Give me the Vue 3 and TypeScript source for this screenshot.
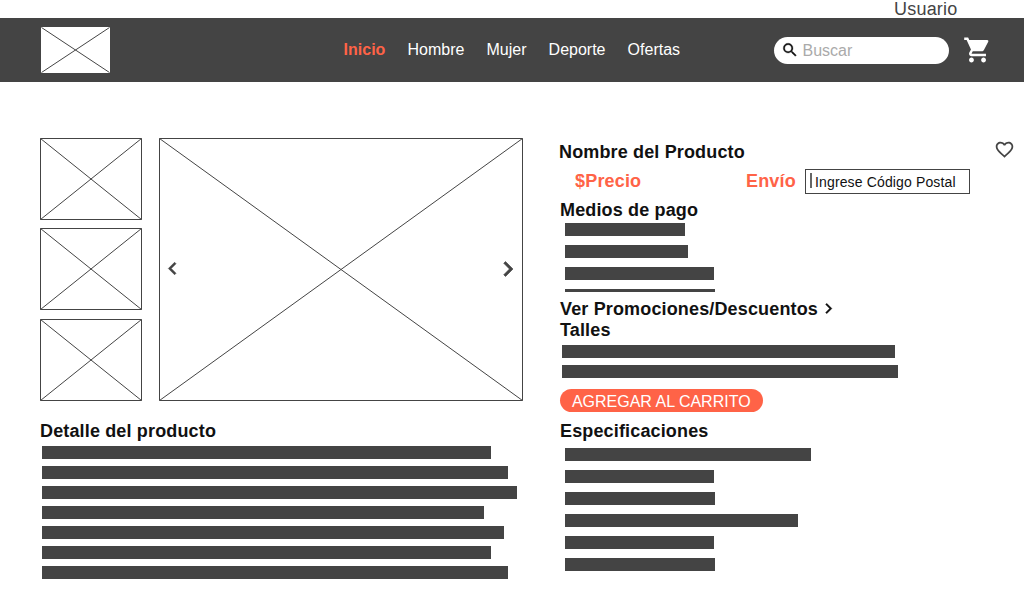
<script setup lang="ts">
interface NavItem {
  label: string
  active?: boolean
}

const navItems: NavItem[] = [
  { label: 'Inicio', active: true },
  { label: 'Hombre' },
  { label: 'Mujer' },
  { label: 'Deporte' },
  { label: 'Ofertas' },
]

const detailLines: number[] = [449, 466, 475, 442, 462, 449, 466]
const paymentLines: number[] = [120, 123, 149, 150]
const sizeLines: number[] = [333, 336]
const specLines: number[] = [246, 149, 150, 233, 149, 150]
</script>

<template>
  <div class="page">
    <div class="topbar"><span class="user">Usuario</span></div>

    <header class="header">
      <svg class="logo" viewBox="0 0 69 46">
        <rect width="69" height="46" fill="#fff" />
        <path d="M0.5 0.5L68.5 45.5M68.5 0.5L0.5 45.5" stroke="#444" />
      </svg>
      <nav class="nav">
        <a v-for="item in navItems" :key="item.label" :class="{ active: item.active }">{{ item.label }}</a>
      </nav>
      <div class="search">
        <svg class="search-icon" viewBox="0 0 24 24">
          <path d="M15.5 14h-.79l-.28-.27A6.47 6.47 0 0 0 16 9.5 6.5 6.5 0 1 0 9.5 16c1.61 0 3.09-.59 4.23-1.57l.27.28v.79l5 4.99L20.49 19l-4.99-5zm-6 0C7.01 14 5 11.99 5 9.5S7.01 5 9.5 5 14 7.01 14 9.5 11.99 14 9.5 14z" />
        </svg>
        <span>Buscar</span>
      </div>
      <svg class="cart" viewBox="0 0 24 24" preserveAspectRatio="none">
        <path d="M7 18c-1.1 0-1.99.9-1.99 2S5.9 22 7 22s2-.9 2-2-.9-2-2-2zM1 2v2h2l3.6 7.59-1.35 2.45c-.16.28-.25.61-.25.96 0 1.1.9 2 2 2h12v-2H7.42c-.14 0-.25-.11-.25-.25l.03-.12.9-1.63h7.45c.75 0 1.41-.41 1.75-1.03l3.58-6.49A1 1 0 0 0 20 4H5.21l-.94-2H1zm16 16c-1.1 0-1.99.9-1.99 2s.89 2 1.99 2 2-.9 2-2-.9-2-2-2z" />
      </svg>
    </header>

    <main class="main">
      <section class="left">
        <div class="gallery">
          <div class="thumbs">
            <svg v-for="n in 3" :key="n" class="thumb" viewBox="0 0 102 82">
              <path d="M0.5 0.5H101.5V81.5H0.5ZL101.5 81.5M101.5 0.5L0.5 81.5" />
            </svg>
          </div>
          <div class="viewer">
            <svg class="photo" viewBox="0 0 364 263">
              <path d="M0.5 0.5H363.5V262.5H0.5ZL363.5 262.5M363.5 0.5L0.5 262.5" />
            </svg>
            <svg class="prev" viewBox="0 0 24 24"><path d="M15.41 7.41L14 6l-6 6 6 6 1.41-1.41L10.83 12z" /></svg>
            <svg class="next" viewBox="0 0 24 24"><path d="M10 6L8.59 7.41 13.17 12l-4.58 4.59L10 18l6-6z" /></svg>
          </div>
        </div>
        <h2 class="detail-title">Detalle del producto</h2>
        <div class="bars detail">
          <div v-for="(w, i) in detailLines" :key="i" class="bar" :style="{ width: w + 'px' }"></div>
        </div>
      </section>

      <section class="right">
        <div class="name-row">
          <h1>Nombre del Producto</h1>
          <svg class="heart" viewBox="0 0 24 24">
            <path d="M16.5 3c-1.74 0-3.41.81-4.5 2.09C10.91 3.81 9.24 3 7.5 3 4.42 3 2 5.42 2 8.5c0 3.78 3.4 6.86 8.55 11.54L12 21.35l1.45-1.32C18.6 15.36 22 12.28 22 8.5 22 5.42 19.58 3 16.5 3zm-4.4 15.55l-.1.1-.1-.1C7.14 14.24 4 11.39 4 8.5 4 6.5 5.5 5 7.5 5c1.54 0 3.04.99 3.57 2.36h1.87C13.46 5.99 14.96 5 16.5 5c2 0 3.5 1.5 3.5 3.5 0 2.89-3.14 5.74-7.9 10.05z" />
          </svg>
        </div>
        <div class="price-row">
          <span class="price">$Precio</span>
          <span class="shipping">Envío</span>
          <div class="postal"><i class="caret"></i><span>Ingrese Código Postal</span></div>
        </div>
        <h2 class="payment-title">Medios de pago</h2>
        <div class="bars payment">
          <div v-for="(w, i) in paymentLines" :key="i" class="bar" :style="{ width: w + 'px' }"></div>
        </div>
        <h2 class="promo">
          <span>Ver Promociones/Descuentos</span>
          <svg viewBox="0 0 24 24"><path d="M10 6L8.59 7.41 13.17 12l-4.58 4.59L10 18l6-6z" /></svg>
        </h2>
        <h2 class="sizes-title">Talles</h2>
        <div class="bars sizes">
          <div v-for="(w, i) in sizeLines" :key="i" class="bar" :style="{ width: w + 'px' }"></div>
        </div>
        <button class="add">AGREGAR AL CARRITO</button>
        <h2>Especificaciones</h2>
        <div class="bars specs">
          <div v-for="(w, i) in specLines" :key="i" class="bar" :style="{ width: w + 'px' }"></div>
        </div>
      </section>
    </main>
  </div>
</template>

<style>
body {
  margin: 0;
  background: #fff;
  overflow: hidden;
}
</style>

<style scoped>
.page {
  width: 1024px;
  height: 599px;
  overflow: hidden;
  background: #fff;
  color: #111;
  font-family: "Liberation Sans", Arial, sans-serif;
}
svg {
  display: block;
  flex: none;
}
h1,
h2 {
  margin: 0;
  font-size: 18px;
  line-height: 20px;
  font-weight: 700;
  letter-spacing: 0.15px;
  white-space: nowrap;
}
.topbar {
  height: 18px;
  display: flex;
  justify-content: flex-end;
  padding-right: 66.6px;
}
.user {
  margin-top: -1px;
  font-size: 18px;
  line-height: 20px;
  letter-spacing: 0.18px;
  color: #444;
}
.header {
  height: 64px;
  background: #444;
  display: flex;
  align-items: flex-start;
  box-sizing: border-box;
  padding-left: 41px;
}
.logo {
  width: 69px;
  height: 46px;
  margin-top: 9px;
}
.nav {
  display: flex;
  gap: 22.1px;
  width: 430.4px;
  margin: 23px 0 0 233.6px;
  font-size: 16px;
  line-height: 18px;
  color: #fff;
}
.nav .active {
  color: #ff6347;
  font-weight: 700;
}
.search {
  display: flex;
  align-items: center;
  width: 175px;
  height: 27px;
  margin-top: 19px;
  box-sizing: border-box;
  padding-left: 7px;
  border-radius: 14px;
  background: #fff;
  color: #aaa;
  font-size: 16px;
  line-height: 18px;
}
.search-icon {
  width: 18px;
  height: 18px;
  margin: 0 3.5px 1px 0;
  fill: #111;
  stroke: #111;
  stroke-width: 0.4px;
}
.cart {
  width: 29px;
  height: 30px;
  margin: 17px 0 0 14px;
  fill: #fff;
}
.main {
  display: flex;
  padding: 56px 0 0 40px;
}
.left {
  width: 483px;
  margin-right: 37px;
}
.gallery {
  display: flex;
  gap: 17px;
  height: 263px;
}
.thumbs {
  display: flex;
  flex-direction: column;
  gap: 8px;
}
.thumb {
  width: 102px;
  height: 82px;
  fill: none;
  stroke: #444;
}
.thumb:last-child {
  margin-top: 1px;
}
.viewer {
  position: relative;
}
.photo {
  width: 364px;
  height: 263px;
  fill: none;
  stroke: #444;
}
.prev,
.next {
  position: absolute;
  fill: #444;
  stroke: #444;
  stroke-width: 0.5px;
}
.prev {
  width: 25px;
  height: 25px;
  left: 1px;
  top: 118px;
}
.next {
  width: 30px;
  height: 30px;
  right: 0.5px;
  top: 116px;
}
.detail-title {
  margin-top: 20px;
}
.bars {
  display: flex;
  flex-direction: column;
  gap: 9px;
  margin-left: 5px;
}
.bar {
  height: 13px;
  flex: none;
  background: #444;
}
.detail {
  gap: 7px;
  margin: 5px 0 0 2px;
}
.right {
  width: 464px;
}
.name-row {
  display: flex;
  justify-content: space-between;
  height: 31px;
}
.name-row h1 {
  margin: 4px 0 0 -1px;
}
.heart {
  width: 21px;
  height: 21px;
  margin: 1px 9px 0 0;
  fill: #444;
}
.price-row {
  display: flex;
  height: 25px;
  font-size: 18px;
  line-height: 20px;
  font-weight: 700;
  letter-spacing: 0.18px;
  color: #ff6347;
}
.price {
  margin: 2px 0 0 15px;
  width: 171px;
}
.shipping {
  margin-top: 2px;
  width: 59px;
}
.postal {
  display: flex;
  box-sizing: border-box;
  width: 165px;
  height: 25px;
  border: 1px solid #444;
  background: #fff;
  color: #111;
  font-size: 14px;
  line-height: 16px;
  font-weight: 400;
  letter-spacing: 0.14px;
}
.postal span {
  margin: 4px 0 0 3px;
}
.caret {
  width: 2px;
  height: 15px;
  margin: 3px 0 0 4px;
  background: #666;
}
.payment-title {
  margin-top: 6px;
}
.payment {
  height: 69px;
  margin-top: 3px;
  overflow: hidden;
}
.promo {
  display: flex;
  height: 21px;
  margin-top: 7px;
}
.promo svg {
  width: 21px;
  height: 21px;
  margin: -1px 0 0 0;
  fill: #111;
  stroke: #111;
  stroke-width: 0.3px;
}
.sizes {
  gap: 7px;
  margin: 5px 0 0 2px;
}
.add {
  display: flex;
  align-items: center;
  justify-content: center;
  width: 203px;
  height: 23px;
  margin: 11px 0 9px;
  padding: 2px 0.5px 0 0;
  border: 0;
  border-radius: 12px;
  background: #ff6347;
  color: #fff;
  font-family: inherit;
  font-size: 16px;
  line-height: 18px;
  white-space: nowrap;
}
.specs {
  margin-top: 7px;
}
</style>
